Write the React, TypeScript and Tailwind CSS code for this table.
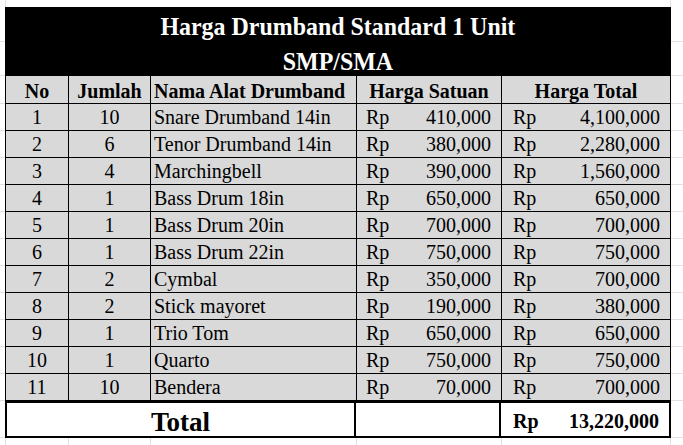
import type { ReactNode } from 'react'
import clsx from 'clsx'

const rows = [
    ['1', '10', 'Snare Drumband 14in', '410,000', '4,100,000'],
    ['2', '6', 'Tenor Drumband 14in', '380,000', '2,280,000'],
    ['3', '4', 'Marchingbell', '390,000', '1,560,000'],
    ['4', '1', 'Bass Drum 18in', '650,000', '650,000'],
    ['5', '1', 'Bass Drum 20in', '700,000', '700,000'],
    ['6', '1', 'Bass Drum 22in', '750,000', '750,000'],
    ['7', '2', 'Cymbal', '350,000', '700,000'],
    ['8', '2', 'Stick mayoret', '190,000', '380,000'],
    ['9', '1', 'Trio Tom', '650,000', '650,000'],
    ['10', '1', 'Quarto', '750,000', '750,000'],
    ['11', '10', 'Bendera', '70,000', '700,000'],
]

// one spreadsheet line: grey gridline gutters left and right, table in the middle
const Line = ({ className, children }: { className: string; children: ReactNode }) => (
    <div className={clsx('flex shrink-0', className)}>
        <div className="w-[5px] shrink-0 border-b border-[#e1e1e1]" />
        <div className="flex w-[666px] shrink-0">{children}</div>
        <div className="flex-1 border-b border-[#e1e1e1]" />
    </div>
)

const cell = 'flex items-end shrink-0 border-r border-b border-black bg-[#d9d9d9]'

const App = () => {
    return (
        <div className="flex h-[445px] w-[683px] flex-col overflow-hidden bg-white font-['Liberation_Serif',serif] text-black">
            <div className="ml-[5px] h-[7px] w-[666px] shrink-0 border-x border-[#e1e1e1]" />

            <Line className="h-[35px]">
                <div className="flex w-full items-end justify-center bg-black pb-[2px] text-[26px] font-bold leading-none text-white">
                    <span className="inline-block scale-x-[0.92]">Harga Drumband Standard 1 Unit</span>
                </div>
            </Line>
            <Line className="h-[34px]">
                <div className="flex w-full items-end justify-center bg-black pb-[1px] text-[26px] font-bold leading-none text-white">
                    <span className="inline-block scale-x-[0.92]">SMP/SMA</span>
                </div>
            </Line>

            <Line className="h-[28px]">
                <div className="flex w-full border-l border-black text-[20px] font-bold leading-none">
                    <div className={clsx(cell, 'w-[63px] justify-center pb-[2px]')}>No</div>
                    <div className={clsx(cell, 'w-[82px] justify-center pb-[2px]')}>Jumlah</div>
                    <div className={clsx(cell, 'w-[206px] pb-[2px] pl-[3px]')}>Nama Alat Drumband</div>
                    <div className={clsx(cell, 'w-[145px] justify-center pb-[2px]')}>Harga Satuan</div>
                    <div className={clsx(cell, 'w-[169px] justify-center pb-[2px]')}>Harga Total</div>
                </div>
            </Line>

            {rows.map((r) => (
                <Line key={r[0]} className="h-[27px]">
                    <div className="flex w-full border-l border-black text-[20px] leading-none">
                        <div className={clsx(cell, 'w-[63px] justify-center pb-[3px]')}>{r[0]}</div>
                        <div className={clsx(cell, 'w-[82px] justify-center pb-[3px]')}>{r[1]}</div>
                        <div className={clsx(cell, 'w-[206px] pb-[3px] pl-[3px]')}>{r[2]}</div>
                        <div className={clsx(cell, 'w-[145px] justify-between pb-[3px] pl-[9px] pr-[10px]')}>
                            <span>Rp</span>
                            <span>{r[3]}</span>
                        </div>
                        <div className={clsx(cell, 'w-[169px] justify-between pb-[3px] pl-[11px] pr-[10px]')}>
                            <span>Rp</span>
                            <span>{r[4]}</span>
                        </div>
                    </div>
                </Line>
            ))}

            <Line className="h-[37px]">
                <div className="flex w-full border-2 border-black bg-white font-bold leading-none">
                    <div className="flex w-[349px] shrink-0 items-end justify-center border-r-2 border-black text-[27px]">
                        Total
                    </div>
                    <div className="w-[145px] shrink-0 border-r-2 border-black" />
                    <div className="flex flex-1 items-end justify-between pb-[5px] pl-[12px] pr-[10px] text-[20px]">
                        <span>Rp</span>
                        <span>13,220,000</span>
                    </div>
                </div>
            </Line>

            <div className="ml-[5px] flex w-[666px] flex-1">
                <div className="w-[64px] shrink-0 border-x border-[#e1e1e1]" />
                <div className="w-[82px] shrink-0 border-r border-[#e1e1e1]" />
                <div className="w-[206px] shrink-0 border-r border-[#e1e1e1]" />
                <div className="w-[145px] shrink-0 border-r border-[#e1e1e1]" />
                <div className="w-[169px] shrink-0 border-r border-[#e1e1e1]" />
            </div>
        </div>
    )
}

export default App
